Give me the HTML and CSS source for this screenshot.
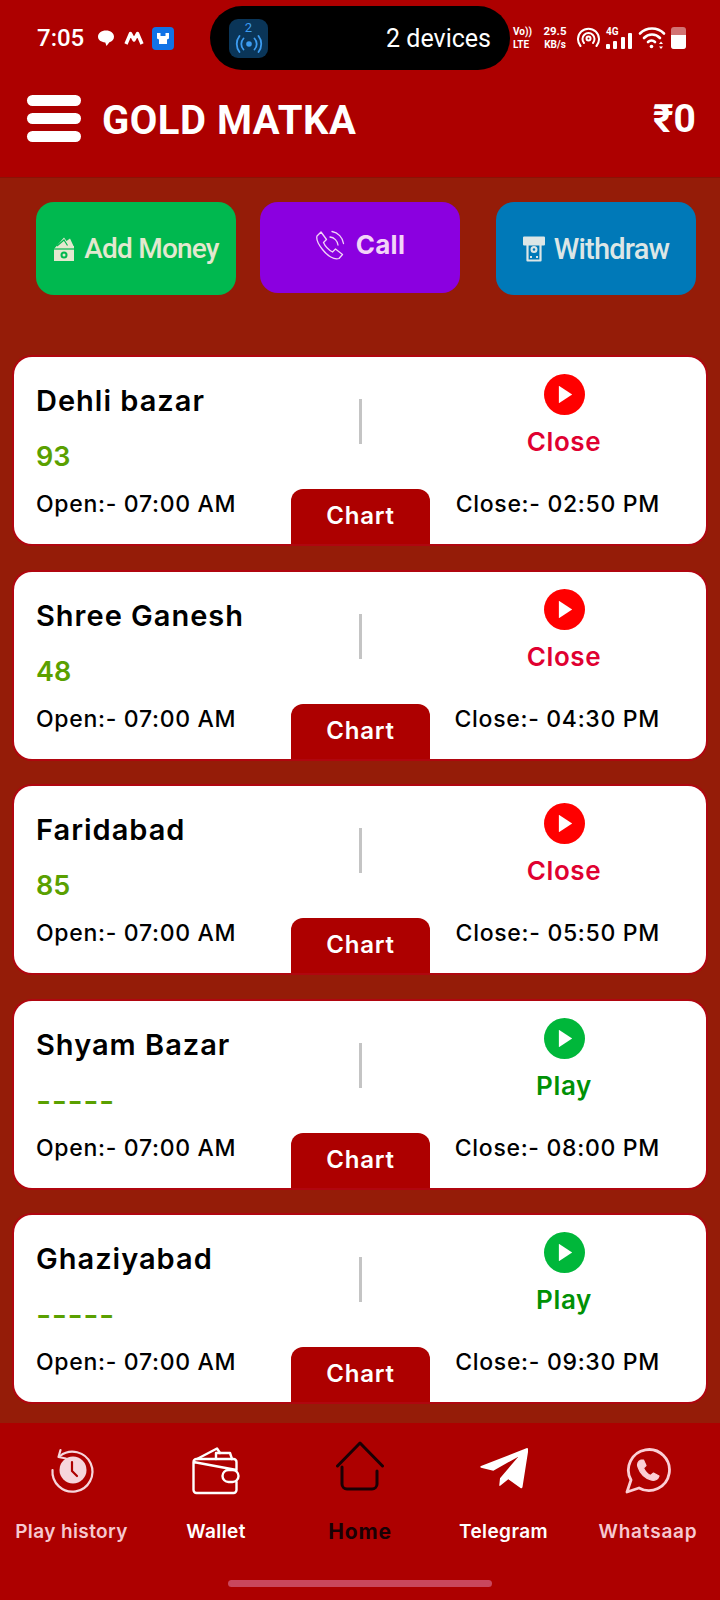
FILE: index.html
```html
<!DOCTYPE html>
<html lang="en">
<head>
    <meta charset="UTF-8">
    <meta name="viewport" content="width=device-width, initial-scale=1.0">
    <title>Gold Matka</title>
    <link rel="stylesheet" href="styles.css">
</head>
<body>
    <svg class="defs" width="0" height="0">
        <symbol id="play" viewBox="0 0 40 40">
            <circle cx="20" cy="20" r="20" fill="currentColor"/>
            <path d="M14.5 11.5 L27.5 20 L14.5 28.5 Z" fill="#fff"/>
        </symbol>
    </svg>

    <div class="app">
        <div class="statusbar">
            <div class="status-left">
                <span class="clock">7:05</span>
                <svg class="st-chat" viewBox="0 0 18 18"><path d="M9 1.5c4.600 0 8 2.600 8 6.200 0 2.800-2 4.800-4.600 5.600L9.500 17l-1.200-3.600C4 13.100 1 10.800 1 7.700 1 4.100 4.400 1.500 9 1.500z" fill="#fff"/></svg>
                <svg class="st-m" viewBox="0 0 20 14"><path d="M2 13 L6.500 2.500 L10 9 L13.500 2.500 L18 13" fill="none" stroke="#fff" stroke-width="3.400" stroke-linejoin="round"/></svg>
                <svg class="st-app" viewBox="0 0 22 23"><rect width="22" height="23" rx="4" fill="#1273e6"/><path d="M5 6h12v5.500l-2 1V17H7v-4.500l-2-1z" fill="#fff"/><rect x="8.500" y="6" width="5" height="3" fill="#1273e6"/></svg>
            </div>
            <div class="island">
                <div class="island-icon">
                    <span class="island-num">2</span>
                    <svg viewBox="0 0 30 18" width="30" height="18"><circle cx="15" cy="9" r="2.800" fill="#3d9cf0"/><path d="M9.500 3.500a8 8 0 0 0 0 11M20.500 3.500a8 8 0 0 1 0 11M5.500 1a13 13 0 0 0 0 16M24.500 1a13 13 0 0 1 0 16" fill="none" stroke="#3d9cf0" stroke-width="1.800" stroke-linecap="round"/></svg>
                </div>
                <span class="island-text">2 devices</span>
            </div>
            <div class="status-right">
                <span class="st-volte">Vo))<br>LTE</span>
                <span class="st-speed">29.5<br><small>KB/s</small></span>
                <svg class="st-hotspot" viewBox="0 0 23 24" fill="none" stroke="#fff" stroke-width="2" stroke-linecap="round"><path d="M3.500 20a10.500 10.500 0 1 1 16 0"/><path d="M7 17a6 6 0 1 1 9 0"/><circle cx="11.500" cy="12.500" r="2"/></svg>
                <div class="st-net">
                    <span class="st-4g">4G</span>
                    <div class="st-bars"><i class="b1"></i><i class="b2"></i><i class="b3"></i><i class="b4"></i></div>
                </div>
                <svg class="st-wifi" viewBox="0 0 28 24" fill="none" stroke="#fff" stroke-width="2.600" stroke-linecap="round"><path d="M2 7.500a17 17 0 0 1 24 0"/><path d="M6 12a11 11 0 0 1 16 0"/><path d="M10 16a5 5 0 0 1 7 0"/><circle cx="13.500" cy="20.500" r="1.800" fill="#fff" stroke="none"/><path d="M23 15.500l2 2.500h-4zM23 23l2-2.500h-4z" fill="#fff" stroke="none"/></svg>
                <div class="st-battery"><div class="st-battery-fill"></div></div>
            </div>
        </div>

        <header class="topbar">
            <div class="menu-btn"><span></span><span></span><span></span></div>
            <div class="brand">GOLD MATKA</div>
            <div class="balance">₹0</div>
        </header>

        <div class="actions">
            <a class="action green">
                <svg viewBox="0 0 22 26" width="22" height="26"><path d="M1 13 L11 1.500 L13.500 5 L17 2.500 L20.500 10 L21 10 L21 25 L1 25 Z" fill="#e3e8cf"/><path d="M4 10 L11 4 L14.500 9.500" fill="none" stroke="#00b84f" stroke-width="1.200"/><path d="M1 13h20" stroke="#00b84f" stroke-width="1.200"/><circle cx="11" cy="19" r="3.500" fill="#00b84f"/><circle cx="11" cy="19" r="1.500" fill="#e3e8cf"/></svg>
                <span>Add Money</span>
            </a>
            <a class="action purple">
                <svg viewBox="0 0 30 30" width="30" height="30" fill="none" stroke="#f2d4f7" stroke-width="1.300" stroke-linecap="round" stroke-linejoin="round"><path d="M2 6 L6 2 L11.500 9.500 L8.500 12.500 C10 16 13 19.500 17.500 22 L20.500 19 L27.500 24.500 L24 28.500 C19 30 12.500 26 7.500 19.500 C3 14 1 9.500 2 6 Z"/><path d="M15 7a9 9 0 0 1 8 8"/><path d="M17 1.500a14 14 0 0 1 11.500 12"/></svg>
                <span>Call</span>
            </a>
            <a class="action blue">
                <svg viewBox="0 0 22 26" width="22" height="26" fill="none" stroke="#dce6e6" stroke-width="2.200" stroke-linejoin="round"><path d="M1.100 1.500h19.800v7H1.100z" fill="#dce6e6"/><path d="M4.500 8.500v16h13v-16"/><circle cx="11" cy="13.500" r="2.400"/><path d="M7 21h2M13 21h2"/></svg>
                <span>Withdraw</span>
            </a>
        </div>

        <main class="list">
            <section class="card">
                <div class="card-info">
                    <h2>Dehli bazar</h2>
                    <div class="score">93</div>
                </div>
                <div class="card-rule"></div>
                <div class="card-status closed">
                    <svg class="play-icon"><use href="#play"/></svg>
                    <span>Close</span>
                </div>
                <div class="time">Open:- 07:00 AM</div>
                <a class="chart">Chart</a>
                <div class="time time-end">Close:- 02:50 PM</div>
            </section>

            <section class="card">
                <div class="card-info">
                    <h2>Shree Ganesh</h2>
                    <div class="score">48</div>
                </div>
                <div class="card-rule"></div>
                <div class="card-status closed">
                    <svg class="play-icon"><use href="#play"/></svg>
                    <span>Close</span>
                </div>
                <div class="time">Open:- 07:00 AM</div>
                <a class="chart">Chart</a>
                <div class="time time-end">Close:- 04:30 PM</div>
            </section>

            <section class="card">
                <div class="card-info">
                    <h2>Faridabad</h2>
                    <div class="score">85</div>
                </div>
                <div class="card-rule"></div>
                <div class="card-status closed">
                    <svg class="play-icon"><use href="#play"/></svg>
                    <span>Close</span>
                </div>
                <div class="time">Open:- 07:00 AM</div>
                <a class="chart">Chart</a>
                <div class="time time-end">Close:- 05:50 PM</div>
            </section>

            <section class="card">
                <div class="card-info">
                    <h2>Shyam Bazar</h2>
                    <div class="score pending">-----</div>
                </div>
                <div class="card-rule"></div>
                <div class="card-status open">
                    <svg class="play-icon"><use href="#play"/></svg>
                    <span>Play</span>
                </div>
                <div class="time">Open:- 07:00 AM</div>
                <a class="chart">Chart</a>
                <div class="time time-end">Close:- 08:00 PM</div>
            </section>

            <section class="card">
                <div class="card-info">
                    <h2>Ghaziyabad</h2>
                    <div class="score pending">-----</div>
                </div>
                <div class="card-rule"></div>
                <div class="card-status open">
                    <svg class="play-icon"><use href="#play"/></svg>
                    <span>Play</span>
                </div>
                <div class="time">Open:- 07:00 AM</div>
                <a class="chart">Chart</a>
                <div class="time time-end">Close:- 09:30 PM</div>
            </section>
        </main>

        <nav class="bottomnav">
            <a class="nav-item faded">
                <svg viewBox="0 0 48 48" fill="none" stroke="#f6d6dc" stroke-width="2.200" stroke-linecap="round" stroke-linejoin="round"><path d="M12 9 A20 20 0 1 1 4.500 23"/><path d="M12.500 3 L10.500 10 L18 11.500"/><circle cx="25" cy="23" r="13.500" fill="#f6d6dc" stroke="none"/><path d="M24 15v9l5 5" stroke="#ad0000"/></svg>
                <span>Play history</span>
            </a>
            <a class="nav-item">
                <svg viewBox="0 0 48 48" fill="none" stroke="#fff" stroke-width="2.400" stroke-linecap="round" stroke-linejoin="round"><path d="M1.500 15v28a3 3 0 0 0 3 3h37a3 3 0 0 0 3-3V35M44.500 23v-8a3 3 0 0 0-3-3h-37a3 3 0 0 0-3 3z"/><path d="M5 12 L25 1.500 L28 6"/><path d="M24 12V6h14l2 6"/><rect x="30.500" y="23" width="16" height="12" rx="6"/></svg>
                <span>Wallet</span>
            </a>
            <a class="nav-item home">
                <svg viewBox="0 0 48 52" fill="none" stroke="#1a0004" stroke-width="3" stroke-linecap="round" stroke-linejoin="round"><path d="M1.500 25 L24 2 L46.500 25"/><path d="M6 26v17a5 5 0 0 0 5 5h25a5 5 0 0 0 5-5V30"/></svg>
                <span>Home</span>
            </a>
            <a class="nav-item">
                <svg viewBox="0 0 48 48" fill="#fff"><path d="M47 1 Q48.500 1 48.300 3 L42.500 40 Q42 42 40.500 41 L28.300 32.300 L20.500 38.500 Q19.300 39.500 19.300 38 L20 31.300 L38.300 9.700 L13.300 23.700 L1 20.800 Q-.5 19.800 1 19 Z"/></svg>
                <span>Telegram</span>
            </a>
            <a class="nav-item faded whatsapp">
                <svg viewBox="0 0 48 48" fill="none" stroke="#fbcfd6" stroke-width="2.800" stroke-linejoin="round"><path d="M3 45 L7 33 A20.500 20.500 0 1 1 15 41 Z"/><path d="M17 13c-2.500 1-4 3.500-3 7 2 6 7 11 13 13 3.500 1 7-.5 8-4l-5.500-3-3 2.500c-3-1.500-5.500-4-7-7.500l2.500-2.500-2.500-5.500z" fill="#fbcfd6" stroke-width="1.200"/></svg>
                <span>Whatsaap</span>
            </a>
        </nav>
        <div class="home-handle"></div>
    </div>
</body>
</html>
```

FILE: styles.css
```css
* {
    box-sizing: border-box;
}
body {
    margin: 0;
    font-family: 'Inter', 'Liberation Sans', sans-serif;
    background-color: #951c08;
    color: #000;
}
.defs {
    position: absolute;
}
.app {
    width: 720px;
    height: 1600px;
    overflow: hidden;
    display: flex;
    flex-direction: column;
}

/* status bar */
.statusbar {
    height: 76px;
    background: #ad0000;
    display: flex;
    align-items: center;
    color: #fff;
    font-family: 'Roboto', sans-serif;
}
.status-left {
    width: 210px;
    padding-left: 37px;
    display: flex;
    align-items: center;
}
.clock {
    font-size: 24px;
    font-weight: 500;
    width: 60px;
}
.st-chat {
    width: 18px;
    height: 18px;
}
.st-m {
    width: 20px;
    height: 14px;
    margin-left: 9px;
}
.st-app {
    width: 22px;
    height: 23px;
    margin-left: 8px;
}
.island {
    width: 300px;
    height: 64px;
    background: #000;
    border-radius: 32px;
    display: flex;
    align-items: center;
    justify-content: space-between;
    padding: 0 19px;
}
.island-icon {
    width: 39px;
    height: 39px;
    background: #0a3558;
    border-radius: 9px;
    display: flex;
    flex-direction: column;
    align-items: center;
    color: #3d9cf0;
    padding-top: 2px;
}
.island-num {
    font-size: 13px;
    line-height: 14px;
}
.island-text {
    font-size: 25px;
}
.status-right {
    flex: 1;
    padding-left: 3px;
    display: flex;
    align-items: center;
}
.st-volte {
    font-size: 10px;
    font-weight: 700;
    line-height: 13px;
    width: 28px;
}
.st-speed {
    font-size: 11.500px;
    font-weight: 700;
    line-height: 13px;
    text-align: center;
    width: 28px;
}
.st-speed small {
    font-size: 10px;
}
.st-hotspot {
    width: 23px;
    height: 24px;
    margin-left: 8px;
}
.st-net {
    margin-left: 6px;
    width: 26px;
    display: flex;
    flex-direction: column;
}
.st-4g {
    font-size: 10px;
    font-weight: 700;
    line-height: 9px;
    margin-bottom: -3px;
}
.st-bars {
    display: flex;
    align-items: flex-end;
    gap: 3.300px;
    height: 16px;
}
.st-bars i {
    display: block;
    width: 4px;
    background: #fff;
    border-radius: 1px;
}
.st-bars .b1 { height: 5px; }
.st-bars .b2 { height: 8px; }
.st-bars .b3 { height: 12px; }
.st-bars .b4 { height: 16px; }
.st-wifi {
    width: 28px;
    height: 24px;
    margin-left: 6px;
}
.st-battery {
    width: 15px;
    height: 22px;
    margin-left: 5px;
    background: rgba(255, 255, 255, 0.45);
    border-radius: 3px;
    overflow: hidden;
    display: flex;
    align-items: flex-end;
}
.st-battery-fill {
    width: 100%;
    height: 65%;
    background: #fff;
}

/* header */
.topbar {
    height: 102px;
    background: #ad0000;
    border-bottom: 1px solid #8a1206;
    display: flex;
    align-items: center;
    padding: 0 24px 16px 27px;
    color: #fff;
    font-family: 'Roboto', sans-serif;
    font-weight: 700;
}
.menu-btn {
    width: 54px;
    display: flex;
    flex-direction: column;
    gap: 7px;
}
.menu-btn span {
    display: block;
    height: 11px;
    background: #fff;
    border-radius: 6px;
}
.brand {
    font-size: 40px;
    letter-spacing: 0.500px;
    margin: 3px 0 0 21px;
    flex: 1;
}
.balance {
    font-size: 39px;
}

/* action buttons */
.actions {
    display: flex;
    padding: 24px 24px 0 36px;
    height: 179px;
    flex-shrink: 0;
}
.action {
    width: 200px;
    height: 93px;
    border-radius: 18px;
    display: flex;
    align-items: center;
    justify-content: center;
    gap: 9px;
    font-family: 'Roboto', sans-serif;
    font-size: 29px;
    font-weight: 500;
    letter-spacing: -0.800px;
}
.green {
    background: #00b84f;
    color: #e3e8cf;
    font-size: 28px;
}
.purple {
    background: #8b00e0;
    color: #f2d4f7;
    margin-left: 24px;
    height: 91px;
    font-family: 'Inter', sans-serif;
    font-size: 26px;
    font-weight: 700;
    padding-bottom: 6px;
    gap: 11px;
    letter-spacing: 0.300px;
}
.blue {
    background: #0079b8;
    color: #dce6e6;
    margin-left: 36px;
}

/* market cards */
.list {
    flex: 1;
    display: flex;
    flex-direction: column;
    gap: 27.600px;
    padding: 0 14px;
}
.card {
    height: 187px;
    flex-shrink: 0;
    background: #fff;
    border-radius: 18px;
    box-shadow: 0 0 0 2px #b0060f;
    overflow: hidden;
    display: grid;
    grid-template-columns: 277px 139px 276px;
    grid-template-rows: 132px 55px;
}
.card-info {
    padding-left: 22px;
}
.card-info h2 {
    margin: 27px 0 0;
    font-size: 29px;
    letter-spacing: 1px;
    line-height: 34px;
    font-weight: 600;
}
.score {
    margin-top: 22px;
    font-size: 27px;
    line-height: 34px;
    font-weight: 600;
    color: #5aa000;
}
.pending {
    font-size: 33px;
    font-weight: 500;
    letter-spacing: 0.500px;
}
.card-rule {
    width: 3px;
    height: 45px;
    background: #c4c4c4;
    margin: 42px auto 0;
}
.card-status {
    display: flex;
    flex-direction: column;
    align-items: center;
    padding: 17px 8px 0 0;
    font-size: 26px;
    letter-spacing: 0.600px;
    font-weight: 600;
    line-height: 34px;
}
.play-icon {
    width: 41px;
    height: 41px;
    margin-bottom: 10px;
}
.closed {
    color: #e00030;
}
.closed .play-icon {
    color: #ff0000;
}
.open {
    color: #009105;
}
.open .play-icon {
    color: #00b73a;
}
.time {
    padding-left: 22px;
    font-size: 23px;
    letter-spacing: 0.700px;
    line-height: 30px;
    font-weight: 500;
}
.time-end {
    padding: 0 46px 0 0;
    text-align: right;
}
.chart {
    background: #ad0000;
    color: #fff;
    border-radius: 12px 12px 0 0;
    display: flex;
    align-items: center;
    justify-content: center;
    font-size: 24px;
    letter-spacing: 0.800px;
    font-weight: 600;
    padding-bottom: 2px;
}

/* bottom nav */
.bottomnav {
    height: 177px;
    flex-shrink: 0;
    background: #ad0000;
    display: grid;
    grid-template-columns: 143px 146px 142px 145px 144px;
    padding-top: 24px;
}
.nav-item {
    display: flex;
    flex-direction: column;
    align-items: center;
    color: #fff;
    font-size: 19px;
    letter-spacing: 0.400px;
    font-weight: 600;
}
.nav-item svg {
    width: 48px;
    height: 48px;
}
.nav-item span {
    margin-top: 24px;
    line-height: 26px;
}
.faded {
    color: #f6c8d0;
}
.whatsapp span {
    letter-spacing: 0.800px;
}
.home {
    color: #1a0004;
}
.home svg {
    height: 52px;
    margin: -6px 0 2px;
}
.home span {
    font-size: 21px;
    font-weight: 700;
    letter-spacing: 0.800px;
}
.home-handle {
    position: absolute;
    left: 228px;
    top: 1580px;
    width: 264px;
    height: 7px;
    border-radius: 4px;
    background: #c9475d;
}
```
